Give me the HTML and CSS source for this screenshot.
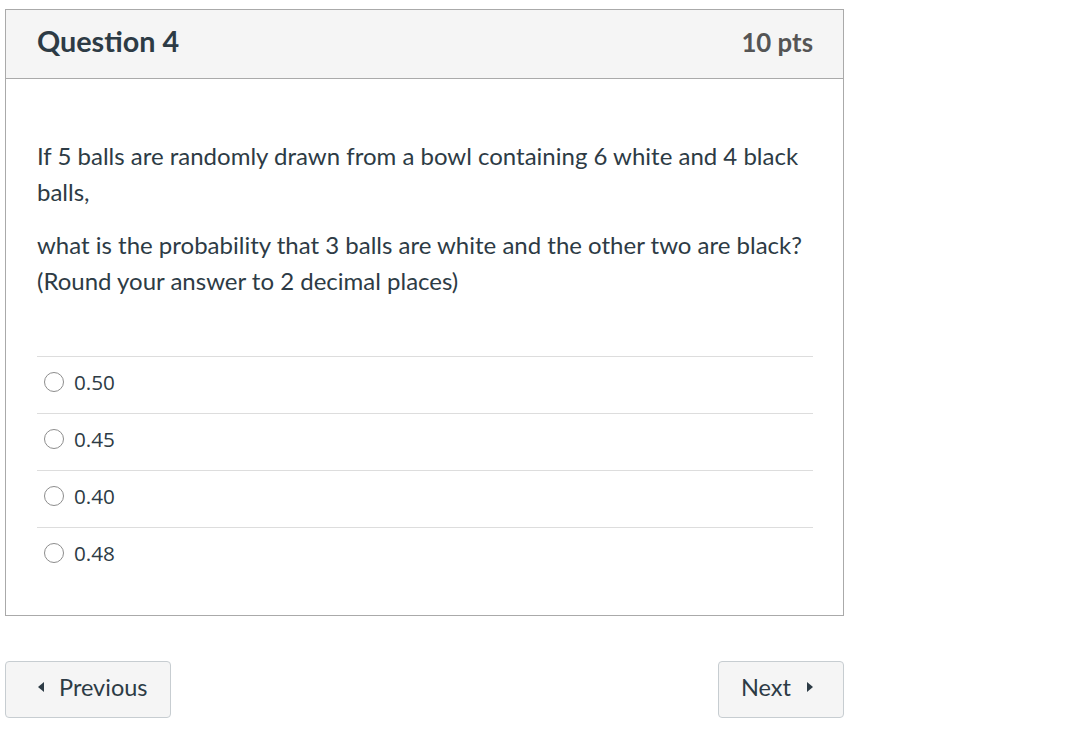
FILE: index.html
```html
<!DOCTYPE html>
<html>
<head>
<meta charset="utf-8">
<link rel="stylesheet" href="styles.css">
</head>
<body>
<div class="page">
  <div class="question">
    <div class="q-header">
      <h2 class="q-title">Question 4</h2>
      <span class="q-points">10 pts</span>
    </div>
    <div class="q-body">
      <div class="q-text">
        <p>If 5 balls are randomly drawn from a bowl containing 6 white and 4 black balls,</p>
        <p>what is the probability that 3 balls are white and the other two are black? (Round your answer to 2 decimal places)</p>
      </div>
      <div class="answers">
        <label class="answer"><span class="radio"></span><span class="answer-text">0.50</span></label>
        <label class="answer"><span class="radio"></span><span class="answer-text">0.45</span></label>
        <label class="answer"><span class="radio"></span><span class="answer-text">0.40</span></label>
        <label class="answer"><span class="radio"></span><span class="answer-text">0.48</span></label>
      </div>
    </div>
  </div>
  <div class="nav">
    <button class="btn btn-prev"><span class="arrow-left"></span>Previous</button>
    <button class="btn btn-next"><span>Next</span><span class="arrow-right"></span></button>
  </div>
</div>
</body>
</html>
```

FILE: styles.css
```css
* { box-sizing: border-box; }
body {
  margin: 0;
  background: #fff;
  font-family: Lato, "Open Sans", sans-serif;
  color: #2d3b45;
}
.page {
  width: 839px;
  margin: 9px 0 0 5px;
}
.question {
  border: 1px solid #aaaaaa;
}
.q-header {
  height: 69px;
  background: #f5f5f5;
  border-bottom: 1px solid #aaaaaa;
  display: flex;
  align-items: center;
  justify-content: space-between;
  padding: 0 30px 7px 31px;
}
.q-title {
  margin: 0;
  font-size: 28.75px;
  font-weight: 700;
  color: #2d3b45;
}
.q-points {
  font-size: 25.8px;
  font-weight: 700;
  color: #555555;
  padding-top: 2px;
}
.q-body {
  padding: 59px 30px 31px 31px;
}
.q-text p {
  margin: 0 0 17px 0;
  font-size: 24px;
  line-height: 36px;
}
.q-text p:last-child { margin-bottom: 0; }
.answers {
  margin-top: 57px;
}
.answer {
  display: flex;
  align-items: center;
  height: 57px;
  border-top: 1px solid #dddddd;
  padding: 0 0 7px 7px;
}
.radio {
  width: 20px;
  height: 20px;
  border: 1px solid #8d8d8d;
  border-radius: 50%;
  background: #fff;
  flex: none;
}
.answer-text {
  margin-left: 10px;
  font-family: "Open Sans", sans-serif;
  font-size: 20.7px;
  color: #2d3b45;
}
.nav {
  display: flex;
  justify-content: space-between;
  margin-top: 45px;
}
.btn {
  height: 57px;
  background: #f5f5f5;
  border: 1px solid #c7cdd1;
  border-radius: 4px;
  font-family: Lato, sans-serif;
  font-size: 23.5px;
  color: #2d3b45;
  display: flex;
  align-items: center;
  padding: 0 22px 5px;
}
.btn-prev { width: 166px; padding-left: 32px; }
.btn-next { width: 126px; padding-left: 22px; }
.arrow-left {
  width: 0; height: 0;
  border-top: 5px solid transparent;
  border-bottom: 5px solid transparent;
  border-right: 6px solid #2d3b45;
  margin-right: 15px;
}
.arrow-right {
  width: 0; height: 0;
  border-top: 5px solid transparent;
  border-bottom: 5px solid transparent;
  border-left: 6px solid #2d3b45;
  margin-left: 16px;
}
```
